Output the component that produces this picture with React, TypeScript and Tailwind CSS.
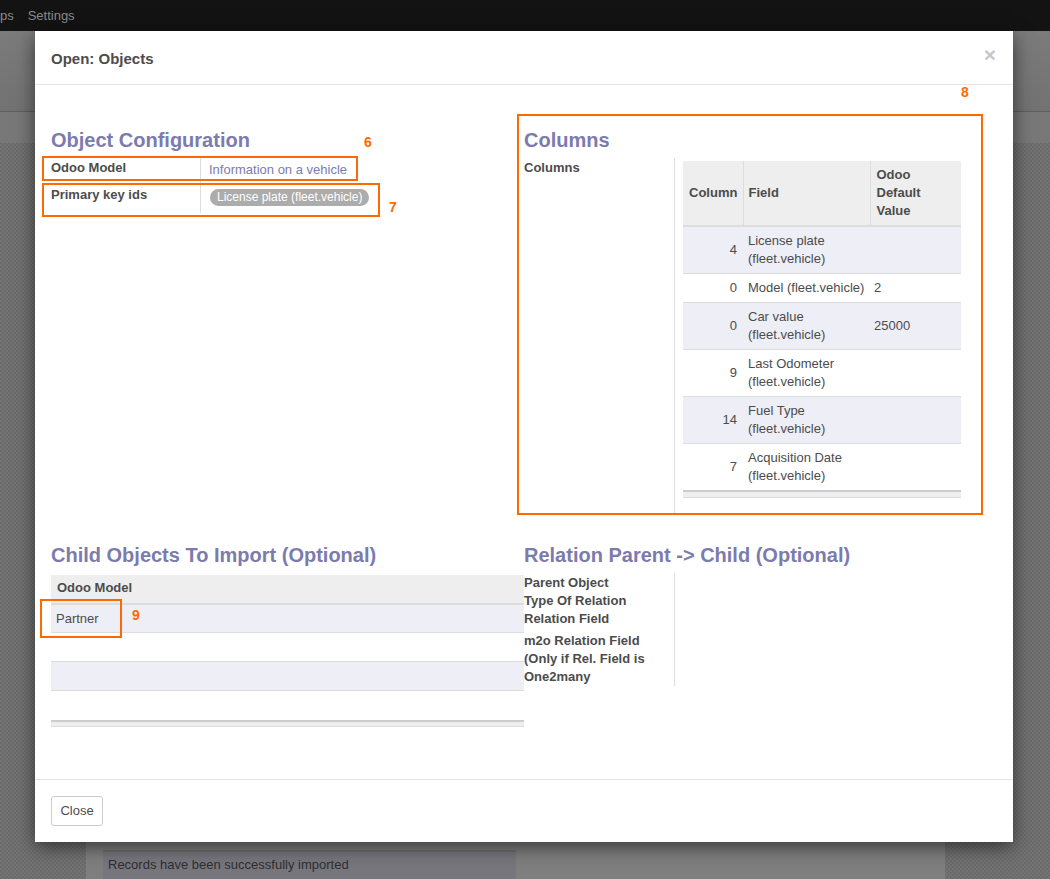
import React from "react";

const columnRows = [
  { col: "4", field: "License plate (fleet.vehicle)", val: "" },
  { col: "0", field: "Model (fleet.vehicle)", val: "2" },
  { col: "0", field: "Car value (fleet.vehicle)", val: "25000" },
  { col: "9", field: "Last Odometer (fleet.vehicle)", val: "" },
  { col: "14", field: "Fuel Type (fleet.vehicle)", val: "" },
  { col: "7", field: "Acquisition Date (fleet.vehicle)", val: "" },
];

// orange boxes drawn over the screenshot
const marks = [
  { left: 42, top: 156, w: 316, h: 25 },
  { left: 42, top: 183, w: 338, h: 34 },
  { left: 517, top: 114, w: 466, h: 401 },
  { left: 40, top: 599, w: 82, h: 39 },
];
const numbers = [
  { n: "6", left: 364, top: 135 },
  { n: "7", left: 389, top: 200 },
  { n: "8", left: 961, top: 85 },
  { n: "9", left: 132, top: 608 },
];

const Title = ({ children }: { children: React.ReactNode }) => (
  <h2 className="text-[20px] leading-6 font-bold text-[#7c7bad]">{children}</h2>
);

const ColumnsTable = () => (
  <table className="table-fixed w-[278px] text-[13px] leading-[18px]">
    <colgroup>
      <col className="w-[60px]" />
      <col className="w-[127px]" />
      <col className="w-[91px]" />
    </colgroup>
    <thead>
      <tr className="bg-[#eeeeee] border-b-2 border-[#dddddd]">
        <th className="px-[6px] py-[5px] text-left font-bold border-r border-[#dddddd]">Column</th>
        <th className="px-[5px] py-[5px] text-left font-bold border-r border-[#dddddd]">Field</th>
        <th className="px-[6px] py-[5px] text-left font-bold">Odoo Default Value</th>
      </tr>
    </thead>
    <tbody>
      {columnRows.map((r, i) => (
        <tr key={i} className={`border-t border-[#dddddd] ${i % 2 === 0 ? "bg-[#eeeef6]" : "bg-white"}`}>
          <td className="pr-[6px] py-[5px] text-right align-middle">{r.col}</td>
          <td className="pl-[5px] pr-[3px] py-[5px] align-middle">{r.field}</td>
          <td className="pl-[4px] py-[5px] align-middle">{r.val}</td>
        </tr>
      ))}
    </tbody>
    <tfoot>
      <tr className="bg-[#eeeeee] border-t-2 border-[#cccccc] border-b border-b-[#dddddd]">
        <td colSpan={3} className="h-[6px] p-0"></td>
      </tr>
    </tfoot>
  </table>
);

const ChildTable = () => (
  <table className="w-[473px] text-[13px] leading-[18px]">
    <thead>
      <tr className="bg-[#eeeeee] border-b-2 border-[#dddddd]">
        <th className="h-[29px] pl-[6px] pb-[1px] text-left font-bold">Odoo Model</th>
      </tr>
    </thead>
    <tbody>
      {["Partner", "", "", ""].map((t, i) => (
        <tr key={i} className={`border-t border-[#dddddd] ${i % 2 === 0 ? "bg-[#eeeef6]" : "bg-white"}`}>
          <td className={`${i === 3 ? "h-[30px]" : "h-[29px]"} pl-[5px] pt-[1px]`}>{t}</td>
        </tr>
      ))}
    </tbody>
    <tfoot>
      <tr className="bg-[#eeeeee] border-t-2 border-[#cccccc] border-b border-b-[#dddddd]">
        <td className="h-[6px] p-0"></td>
      </tr>
    </tfoot>
  </table>
);

export default function App() {
  return (
    <div className="relative w-[1050px] h-[879px] overflow-hidden font-['Liberation_Sans',Arial,sans-serif] text-[13px] bg-[repeating-conic-gradient(#6b6b6b_0%_25%,#737373_0%_50%)] bg-[length:4px_4px]">
      {/* page behind the dialog */}
      <div className="h-[31px] bg-[#131313] flex items-center gap-[14px] text-[13px] text-[#8a8a8a]">
        <span className="ml-[-16px]">Apps</span>
        <span>Settings</span>
      </div>
      <div className="h-[81px] bg-[linear-gradient(#7b7b7b,#727272)] border-b border-[#5e5e5e]"></div>
      <div className="h-[31px] bg-[#787878]"></div>
      <div className="ml-[86px] w-[859px] h-[736px] bg-[#7f7f7f] flex flex-col justify-end">
        <div className="ml-[17px] w-[413px] h-[29px] bg-[#77767d] border-t-2 border-[#6f6f6f] pl-[5px] pt-[3px] text-[13px] text-[#2f2f2f]">
          Records have been successfully imported
        </div>
      </div>

      {/* dialog */}
      <div className="absolute left-[35px] top-[31px] w-[978px] h-[811px] bg-white shadow-[0_5px_18px_rgba(0,0,0,0.55)] flex flex-col text-[#4c4c4c]">
        <div className="h-[54px] border-b border-[#e5e5e5] pl-4 pr-[17px] flex items-center justify-between">
          <h4 className="pt-[3px] text-[15px] font-bold text-[#4c4c4c]">Open: Objects</h4>
          <span className="mb-[6px] text-[21px] font-bold leading-none text-[#c8c8c8]">×</span>
        </div>

        <div className="flex-1 px-4 pt-[43px]">
          <div className="flex">
            <div className="w-[473px]">
              <Title>Object Configuration</Title>
              <div className="mt-[6px] flex flex-col leading-[18px]">
                <div className="flex h-[27px]">
                  <div className="w-[150px] pt-[1px] border-r border-[#dddddd] font-bold">Odoo Model</div>
                  <div className="pl-2 pt-[3px] text-[#7c7bad]">Information on a vehicle</div>
                </div>
                <div className="flex h-[28px]">
                  <div className="w-[150px] pt-[1px] border-r border-[#dddddd] font-bold">Primary key ids</div>
                  <div className="pl-[9px] pt-[3px]">
                    <span className="inline-block h-[17px] rounded-full bg-[#acacac] px-[7px] text-[12px] leading-[17px] text-white">
                      License plate (fleet.vehicle)
                    </span>
                  </div>
                </div>
              </div>
            </div>
            <div className="w-[473px]">
              <Title>Columns</Title>
              <div className="mt-[6px] flex">
                <div className="w-[151px] pt-[1px] border-r border-[#dddddd] font-bold leading-[18px]">Columns</div>
                <div className="pl-2 pt-[3px] pb-4">
                  <ColumnsTable />
                </div>
              </div>
            </div>
          </div>

          <div className="flex mt-[29px]">
            <div className="w-[473px]">
              <Title>Child Objects To Import (Optional)</Title>
              <div className="mt-2">
                <ChildTable />
              </div>
            </div>
            <div className="w-[473px]">
              <Title>Relation Parent -&gt; Child (Optional)</Title>
              <div className="mt-[6px] flex">
                <div className="w-[151px] pr-2 pt-[1px] border-r border-[#dddddd] font-bold leading-[18px]">
                  <div>Parent Object</div>
                  <div>Type Of Relation</div>
                  <div>Relation Field</div>
                  <div className="mt-1">m2o Relation Field (Only if Rel. Field is One2many</div>
                </div>
              </div>
            </div>
          </div>
        </div>

        <div className="h-[63px] border-t border-[#e5e5e5] px-4 flex items-center">
          <button className="h-[30px] w-[52px] rounded-[3px] border border-[#cccccc] bg-white text-[13px] text-[#4c4c4c]">
            Close
          </button>
        </div>
      </div>

      {/* annotations */}
      {marks.map((m, i) => (
        <div
          key={i}
          className="absolute border-2 border-[#ff6a00]"
          style={{ left: m.left, top: m.top, width: m.w, height: m.h }}
        />
      ))}
      {numbers.map((n) => (
        <span
          key={n.n}
          className="absolute text-[14px] leading-none font-bold text-[#ff6a00]"
          style={{ left: n.left, top: n.top }}
        >
          {n.n}
        </span>
      ))}
    </div>
  );
}
